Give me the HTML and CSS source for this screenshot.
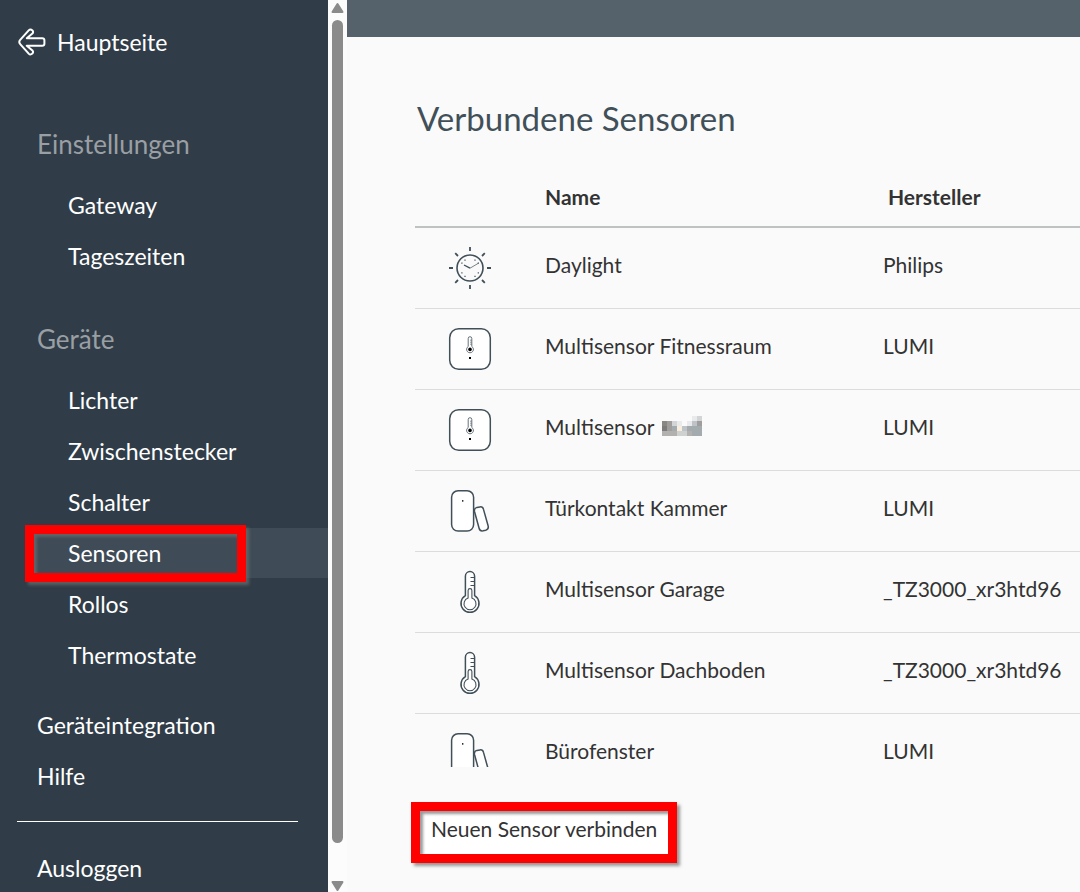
FILE: index.html
```html
<!DOCTYPE html>
<html lang="de">
<head>
  <meta charset="UTF-8">
  <meta name="viewport" content="width=device-width, initial-scale=1">
  <title>Verbundene Sensoren</title>
  <link rel="stylesheet" href="styles.css">
</head>
<body>

<!-- shared device icons -->
<svg class="icon-defs" width="0" height="0" aria-hidden="true">
  <symbol id="icon-daylight" viewBox="0 0 44 44">
    <circle cx="22" cy="22" r="13" stroke-width="1.6"/>
    <path d="M22 1v4M22 39v4M1 22h4M39 22h4M7.2 7.2l2.8 2.8M34 34l2.8 2.8M36.8 7.2L34 10M10 34l-2.8 2.8" stroke-width="1.8"/>
    <path d="M16 19l6 3.2" stroke-width="1.4"/>
    <path d="M22 22.2l8.5-5" stroke-width="0.7"/>
    <path d="M17 13.5v1.2M27 13.5v1.2M17 29.8v1.2M27 29.8v1.2M13.3 17.2h1.2M29.7 17.2h1.2M13.3 26.8h1.2M29.7 26.8h1.2" stroke-width="1.2"/>
  </symbol>
  <symbol id="icon-multi" viewBox="0 0 44 44">
    <rect x="1.7" y="1.7" width="40.6" height="40.6" rx="9" fill="#fff" stroke-width="1.5"/>
    <path d="M20.2 19.5v-8a1.8 1.8 0 0 1 3.6 0v8a3.4 3.4 0 1 1-3.6 0z" stroke-width="0.8"/>
    <path d="M22 13.2h1.6M22 15.2h1.6M22 17.2h1.6" stroke-width="0.6"/>
    <circle cx="22" cy="22.4" r="1.8" fill="#000" stroke="none"/>
    <rect x="21" y="30" width="2" height="2" fill="#000" stroke="none"/>
  </symbol>
  <symbol id="icon-contact" viewBox="0 0 44 44">
    <rect x="3.6" y="1.7" width="22" height="40.4" rx="6.5" fill="#fff" stroke-width="1.5"/>
    <path d="M26.5 22.5c-.4-2 .6-3.6 2.4-4.1l3-.5c2-.3 3.2.8 3.6 2.5l4.6 16.4c.6 2.3-.5 3.9-2.4 4.4l-2.6.6c-2 .4-3.5-.6-4-2.5z" fill="#fff" stroke-width="1.5"/>
    <rect x="14" y="11.2" width="1.4" height="1.4" fill="#000" stroke="none"/>
  </symbol>
  <symbol id="icon-thermo" viewBox="0 0 44 44">
    <path d="M17.4 25.6V6.2a4.6 4.6 0 0 1 9.2 0v19.4a9 9 0 1 1-9.2 0z" fill="#fff" stroke-width="1.5"/>
    <path d="M22.5 7.5h4M22.5 11.5h4M22.5 15.5h4" stroke-width="1"/>
    <path d="M20.1 28V20.5a1.9 1.9 0 0 1 3.8 0V28a6 6 0 1 1-3.8 0z" stroke-width="1.1"/>
  </symbol>
</svg>

<div class="app">
  <aside class="sidebar">
    <a class="back-link" href="#">
      <svg class="back-icon" viewBox="0 0 28 28" width="28" height="28" aria-hidden="true">
        <path d="M14.4 2.4C13 1.2 11.7 1.4 10.7 2.4L2.4 11.6C1.1 13 1.1 15 2.4 16.4l8.3 9.2c1 1 2.3 1.2 3.7 0 .9-1 .8-2.2 0-3.2l-5.6-4.7h15.4c1.5 0 2.2-.7 2.2-1.9v-3.6c0-1.2-.7-1.9-2.2-1.9H8.8l5.6-4.7c.8-1 .9-2.2 0-3.2z"/>
      </svg>
      <span>Hauptseite</span>
    </a>

    <nav>
      <h2 class="nav-title">Einstellungen</h2>
      <ul class="nav-list">
        <li><a class="nav-link" href="#">Gateway</a></li>
        <li><a class="nav-link" href="#">Tageszeiten</a></li>
      </ul>

      <h2 class="nav-title">Geräte</h2>
      <ul class="nav-list">
        <li><a class="nav-link" href="#">Lichter</a></li>
        <li><a class="nav-link" href="#">Zwischenstecker</a></li>
        <li><a class="nav-link" href="#">Schalter</a></li>
        <li class="active"><a class="nav-link" href="#">Sensoren</a><span class="marker marker-nav"></span></li>
        <li><a class="nav-link" href="#">Rollos</a></li>
        <li><a class="nav-link" href="#">Thermostate</a></li>
      </ul>

      <ul class="nav-list nav-main">
        <li><a class="nav-link" href="#">Geräteintegration</a></li>
        <li><a class="nav-link" href="#">Hilfe</a></li>
      </ul>
      <hr class="nav-line">
      <ul class="nav-list nav-main">
        <li><a class="nav-link" href="#">Ausloggen</a></li>
      </ul>
    </nav>
  </aside>

  <div class="scrollbar" aria-hidden="true">
    <svg class="scroll-arrow" viewBox="0 0 19 20" width="19" height="20"><path d="M9.5 4l5 8h-10z"/></svg>
    <div class="scroll-track"><div class="scroll-thumb"></div></div>
    <svg class="scroll-arrow" viewBox="0 0 19 20" width="19" height="20"><path d="M9.5 18l5-8h-10z"/></svg>
  </div>

  <main class="content">
    <div class="topbar"></div>
    <section class="sensors">
      <h1 class="page-title">Verbundene Sensoren</h1>
      <div class="table-wrap">
        <table class="sensor-table">
          <colgroup>
            <col class="col-icon">
            <col class="col-name">
            <col>
          </colgroup>
          <thead>
            <tr><th></th><th>Name</th><th class="th-maker">Hersteller</th></tr>
          </thead>
          <tbody>
            <tr>
              <td><svg class="icon"><use href="#icon-daylight"/></svg></td>
              <td>Daylight</td>
              <td>Philips</td>
            </tr>
            <tr>
              <td><svg class="icon"><use href="#icon-multi"/></svg></td>
              <td>Multisensor Fitnessraum</td>
              <td>LUMI</td>
            </tr>
            <tr>
              <td><svg class="icon"><use href="#icon-multi"/></svg></td>
              <td>Multisensor
                <svg class="mosaic" viewBox="0 0 8 4" width="40" height="20" preserveAspectRatio="none" shape-rendering="crispEdges" aria-hidden="true">
                  <path fill="#e9eaeb" d="M6 0h1v1H6zM3 1h1v1H3zM5 1h1v1H5z"/>
                  <path fill="#d3d4d6" d="M7 0h1v1H7zM2 1h1v1H2z"/>
                  <path fill="#8b8781" d="M0 1h1v1H0z"/>
                  <path fill="#9f9e9c" d="M1 1h1v1H1zM7 1h1v1H7zM1 2h1v1H1z"/>
                  <path fill="#bdc3c7" d="M6 1h1v1H6zM4 2h1v1H4z"/>
                  <path fill="#7d7c7b" d="M0 2h1v1H0z"/>
                  <path fill="#a4abaf" d="M2 2h1v1H2zM5 2h1v1H5zM6 2h2v2H6z"/>
                  <path fill="#f9eddd" d="M3 2h1v1H3z"/>
                  <path fill="#b3b1af" d="M0 3h3v1H0zM5 3h1v1H5z"/>
                  <path fill="#cfd0d0" d="M3 3h2v1H3z"/>
                </svg>
              </td>
              <td>LUMI</td>
            </tr>
            <tr>
              <td><svg class="icon"><use href="#icon-contact"/></svg></td>
              <td>Türkontakt Kammer</td>
              <td>LUMI</td>
            </tr>
            <tr>
              <td><svg class="icon"><use href="#icon-thermo"/></svg></td>
              <td>Multisensor Garage</td>
              <td>_TZ3000_xr3htd96</td>
            </tr>
            <tr>
              <td><svg class="icon"><use href="#icon-thermo"/></svg></td>
              <td>Multisensor Dachboden</td>
              <td>_TZ3000_xr3htd96</td>
            </tr>
            <tr>
              <td><svg class="icon"><use href="#icon-contact"/></svg></td>
              <td>Bürofenster</td>
              <td>LUMI</td>
            </tr>
          </tbody>
        </table>
      </div>
      <div class="actions">
        <button class="connect-button" type="button">Neuen Sensor verbinden</button>
        <span class="marker marker-button"></span>
      </div>
    </section>
  </main>
</div>

</body>
</html>
```
FILE: styles.css
```css
* {
  box-sizing: border-box;
}

body {
  margin: 0;
  font-family: Lato, "Liberation Sans", sans-serif;
  color: #333;
  background: #fafafa;
}

.icon-defs {
  position: absolute;
}

.app {
  display: flex;
  height: 100vh;
  overflow: hidden;
}

/* sidebar */
.sidebar {
  flex: 0 0 328px;
  padding-top: 17px;
  background: #303d48;
  overflow: hidden;
}

.back-link {
  display: flex;
  align-items: center;
  gap: 11px;
  height: 50px;
  padding-left: 18px;
  margin-bottom: 52px;
  color: #fff;
  font-size: 23px;
  text-decoration: none;
}

.back-icon {
  fill: none;
  stroke: #fff;
  stroke-width: 2;
  stroke-linejoin: round;
}

.nav-title {
  margin: 0 0 11px;
  padding-left: 37px;
  font-size: 26px;
  font-weight: normal;
  line-height: 50px;
  color: #9a9fa4;
}

.nav-list {
  list-style: none;
  margin: 0 0 33px;
  padding: 0;
}

.nav-list li {
  position: relative;
  margin-bottom: 1px;
}

.nav-link {
  display: block;
  padding-left: 68px;
  font-size: 23px;
  line-height: 50px;
  color: #fff;
  text-decoration: none;
}

.active .nav-link {
  margin-left: 30px;
  padding-left: 38px;
  background: #3f4c57;
}

.nav-main {
  margin: -13px 0 0;
}

.nav-main .nav-link {
  padding-left: 37px;
}

.nav-line {
  height: 1px;
  margin: 20px 30px 34px 17px;
  border: none;
  background: #fff;
}

/* red frames */
.marker {
  position: absolute;
  border: 9px solid #f00;
  box-shadow: 3px 3px 3px rgba(110,110,110,0.7), inset 3px 3px 3px rgba(110,110,110,0.7);
  pointer-events: none;
}

.marker-nav {
  top: -3px;
  left: 25px;
  width: 221px;
  height: 57px;
  z-index: 1;
}

.marker-button {
  inset: -9px;
}

/* scrollbar */
.scrollbar {
  flex: 0 0 19px;
  display: flex;
  flex-direction: column;
  background: #fcfcfc;
}

.scroll-arrow {
  display: block;
  fill: #8b8b8b;
  stroke: #8b8b8b;
  stroke-width: 2;
  stroke-linejoin: round;
}

.scroll-track {
  flex: 1;
  padding: 0 4px;
}

.scroll-thumb {
  height: 96.6%;
  border-radius: 6px;
  background: #8b8b8b;
}

/* content */
.content {
  flex: 1;
  min-width: 0;
}

.topbar {
  height: 37px;
  background: #56626b;
}

.sensors {
  padding: 56px 0 0 68px;
}

.page-title {
  margin: 0 0 27px;
  padding-left: 2px;
  font-size: 33px;
  font-weight: normal;
  line-height: 50px;
  color: #414f58;
}

.table-wrap {
  height: 597px;
  overflow: hidden;
}

.sensor-table {
  width: 100%;
  table-layout: fixed;
  border-collapse: collapse;
  font-size: 21px;
}

.col-icon {
  width: 130px;
}

.col-name {
  width: 338px;
}

.sensor-table th {
  height: 57px;
  padding: 0 0 3px;
  text-align: left;
  border-bottom: 2px solid #bfc2c3;
}

.sensor-table .th-maker {
  padding-left: 5px;
}

.sensor-table td {
  height: 81px;
  padding: 0 0 6px;
  border-bottom: 1px solid #dcdcdc;
}

.sensor-table td:first-child {
  padding: 0 0 0 33px;
}

.icon {
  display: block;
  width: 44px;
  height: 44px;
  fill: none;
  stroke: #414f58;
}

.mosaic {
  margin-left: 3px;
  vertical-align: -1px;
}

.actions {
  position: relative;
  width: max-content;
  margin: 44px 0 0 5px;
}

.connect-button {
  display: block;
  height: 43px;
  padding: 0 11px 8px;
  border: none;
  background: #fff;
  color: #333;
  font-family: inherit;
  font-size: 21px;
  cursor: pointer;
}
```
